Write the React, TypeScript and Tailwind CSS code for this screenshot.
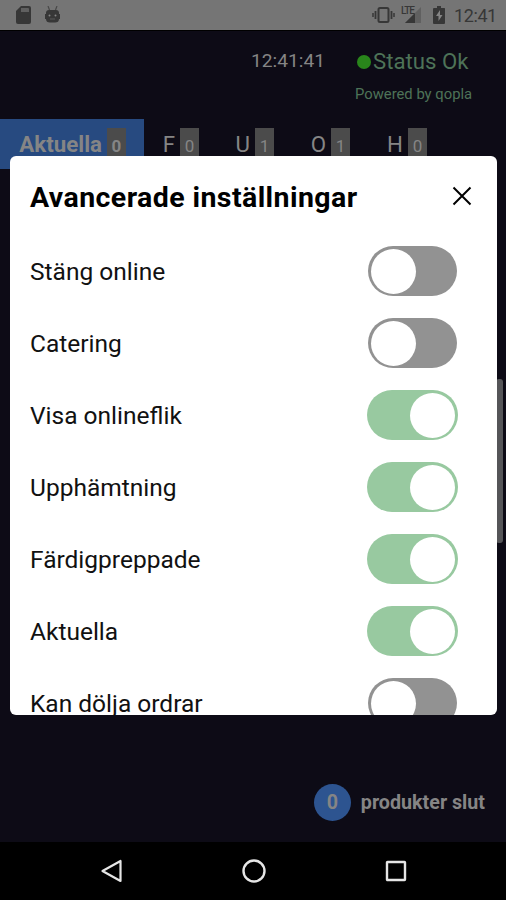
import { useState } from 'react';

const tabs = [
  { name: "Aktuella", count: 0, width: "w-[144px]", active: true },
  { name: "F", count: 0, width: "w-[73px]", active: false },
  { name: "U", count: 1, width: "w-[75px]", active: false },
  { name: "O", count: 1, width: "w-[76px]", active: false },
  { name: "H", count: 0, width: "w-[77px]", active: false }
];

function StatusBar() {
  return (
    <div className="h-[30px] bg-[#757575] flex items-center justify-between pl-4 pr-[9px] text-[#373737]">
      <div className="flex items-center gap-[14px]">
        <svg width="15" height="18" viewBox="0 0 15 18">
          <path d="M5 0h8a2 2 0 0 1 2 2v14a2 2 0 0 1-2 2H2a2 2 0 0 1-2-2V5z" fill="currentColor" />
          <path d="M5 2h7q1 0 1 1v3H5z" fill="#606060" />
        </svg>
        <svg width="15" height="18" viewBox="0 0 15 18">
          <path d="M3 0l1.500 4M12 0l-1.500 4" stroke="#484848" strokeWidth="1.2" />
          <path d="M1 7q0-3 3-3h7q3 0 3 3v6q0 3.500-4 3.500H5q-4 0-4-3.500z" fill="currentColor" />
          <path d="M.5 8v5M14.500 8v5" stroke="currentColor" />
          <circle cx="4.5" cy="9.500" r="1" fill="#858585" />
          <circle cx="10.5" cy="9.500" r="1" fill="#858585" />
          <path d="M5 13h5" stroke="#5a5a5a" />
        </svg>
      </div>
      <div className="flex items-center">
        <svg width="23" height="18" viewBox="0 0 23 18" fill="none" stroke="currentColor">
          <rect x="6.500" y="2" width="10" height="14" rx="1.500" strokeWidth="2" />
          <path d="M3.500 5v8M19.500 5v8" strokeWidth="1.800" />
          <path d="M1 7v4M22 7v4" strokeWidth="1.500" />
        </svg>
        <div className="ml-[6px] flex h-[18px] w-[22px]">
          <span className="text-[10px] leading-[9px] font-medium tracking-[-1px]">LTE</span>
          <svg className="-ml-[10px] shrink-0" width="18" height="18" viewBox="0 0 18 18">
            <path d="M17 1v16H1z" fill="#606060" />
            <path d="M11 7v10H1z" fill="currentColor" />
          </svg>
        </div>
        <svg className="ml-[10px]" width="12" height="18" viewBox="0 0 12 18">
          <path d="M4 0h4v2h3.500q.5 0 .5 1v14q0 1-1 1H1q-1 0-1-1V3q0-1 1-1h3z" fill="currentColor" />
          <path d="M7 4l-4 6h2.500v5L9.500 9H7z" fill="#858585" />
        </svg>
        <span className="ml-[9px] w-[43px] pt-px text-[18px] leading-[30px] tracking-[-0.4px] whitespace-nowrap">12:41</span>
      </div>
    </div>
  );
}

function Toggle({ on, onClick }: { on: boolean; onClick: () => void }) {
  return (
    <button
      role="switch"
      aria-checked={on}
      onClick={onClick}
      className={`mb-[2px] h-[50px] rounded-full flex items-center ${on ? 'w-[91px] bg-[#98c9a0] justify-end pr-[3px]' : 'w-[89px] mr-px bg-[#929292] pl-[3px]'}`}
    >
      <span className="block size-[45px] rounded-full bg-white"></span>
    </button>
  );
}

export default function App() {
  const [open, setOpen] = useState(true);
  const [settings, setSettings] = useState([
    { name: "Stäng online", on: false },
    { name: "Catering", on: false },
    { name: "Visa onlineflik", on: true },
    { name: "Upphämtning", on: true },
    { name: "Färdigpreppade", on: true },
    { name: "Aktuella", on: true },
    { name: "Kan dölja ordrar", on: false }
  ]);

  const toggle = (name: string) => {
    setSettings(settings.map(s => s.name === name ? { ...s, on: !s.on } : s));
  };

  return (
    <div className="relative w-[506px] h-[900px] overflow-hidden bg-[#0d0b16] flex flex-col font-[Roboto,sans-serif]">
      <StatusBar />

      {/* Clock and connection status */}
      <header className="h-[89px] flex justify-end pr-[34px] border-t border-black">
        <span className="mt-[15px] text-[19.2px] leading-[30px] text-[#858585] w-[75px] whitespace-nowrap">12:41:41</span>
        <div className="ml-[29px] w-[117px]">
          <div className="mt-[15px] ml-[2px] flex items-center text-[22.2px] leading-[31px] text-[#4e7358] whitespace-nowrap">
            <span className="mr-[2px] size-[14px] shrink-0 rounded-full bg-[#29851b]"></span>
            Status Ok
          </div>
          <p className="mt-[7px] text-[14.8px] leading-5 text-[#4e7358] whitespace-nowrap">Powered by qopla</p>
        </div>
      </header>

      <nav className="flex h-[50px]">
        {tabs.map(t => (
          <div key={t.name} className={`${t.width} flex justify-end pr-[18px] pt-[9px] text-[22.3px] text-[#858585] ${t.active ? 'bg-[#274a80] font-bold' : ''}`}>
            <span className="leading-[33px]">{t.name}</span>
            <span className="ml-[5px] h-[34px] w-[19px] shrink-0 bg-[#4b4b4b] text-center text-[17px] leading-[37px]">{t.count}</span>
          </div>
        ))}
      </nav>

      <main className="flex-1 flex justify-end">
        <div className="mt-[210px] mr-[3px] h-[164px] w-[7px] rounded-[3px] bg-[#555558]"></div>
      </main>

      <footer className="h-[82px] flex items-center justify-end pt-[2px] pr-[21px] text-[19.7px] font-bold text-[#858585]">
        <span className="mr-[10px] size-[37px] rounded-full bg-[#2d5490] flex items-center justify-center pt-px">0</span>
        <span className="pt-[2px] whitespace-nowrap">produkter slut</span>
      </footer>

      {/* System navigation */}
      <div className="h-[58px] shrink-0 bg-black flex items-center justify-between pl-[100px] pr-[99px]">
        <svg width="22" height="24" viewBox="0 0 22 24" fill="none" stroke="#e6e6e6" strokeWidth="2.200" strokeLinejoin="round">
          <path d="M20.500 2v20L2.500 12z" />
        </svg>
        <svg width="24" height="24" viewBox="0 0 24 24" fill="none" stroke="#e6e6e6" strokeWidth="2.400">
          <circle cx="12" cy="12" r="10.500" />
        </svg>
        <svg width="22" height="22" viewBox="0 0 22 22" fill="none" stroke="#e6e6e6" strokeWidth="2.400">
          <rect x="2" y="2" width="18" height="18" rx="0.500" />
        </svg>
      </div>

      {open && (
        <div className="absolute left-[10px] top-[156px] z-10 w-[487px] h-[559px] overflow-hidden rounded-[6px] bg-white text-black">
          <div className="h-[80px] flex items-center justify-between pl-5 pr-[25px]">
            <h1 className="pt-[4px] text-[28.5px] leading-9 font-bold tracking-[0.42px] whitespace-nowrap">Avancerade inställningar</h1>
            <button onClick={() => setOpen(false)} aria-label="Stäng">
              <svg width="20" height="20" viewBox="0 0 20 20" fill="none" stroke="currentColor" strokeWidth="2">
                <path d="M1.500 1.500l17 17M18.500 1.500l-17 17" />
              </svg>
            </button>
          </div>
          {settings.map(s => (
            <div key={s.name} className="h-[72px] flex items-center justify-between pl-5 pr-[39px] text-[24.5px] whitespace-nowrap text-[#111111]">
              <span className="pt-px">{s.name}</span>
              <Toggle on={s.on} onClick={() => toggle(s.name)} />
            </div>
          ))}
        </div>
      )}
    </div>
  );
}
